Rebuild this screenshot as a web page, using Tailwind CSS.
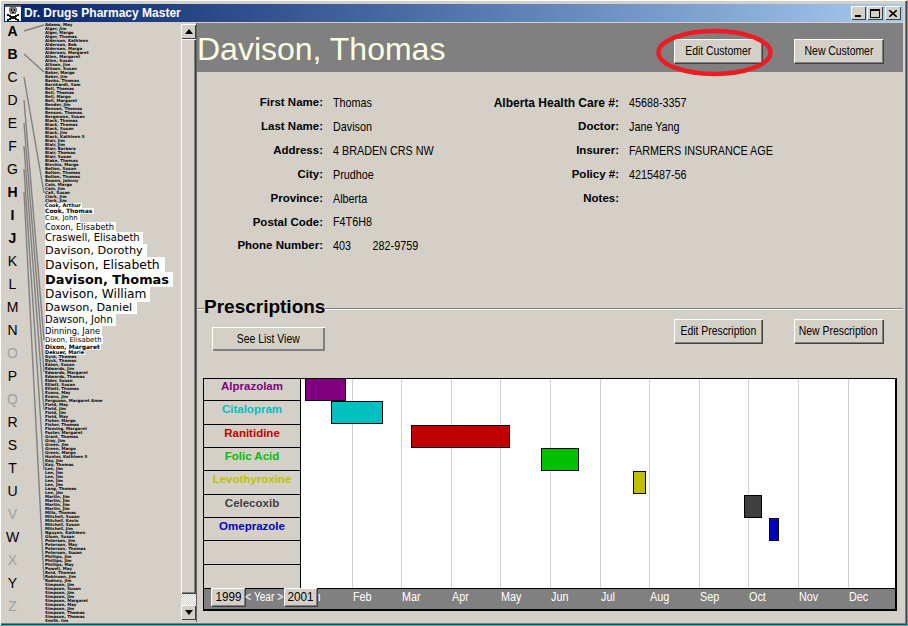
<!DOCTYPE html>
<html>
<head>
<meta charset="utf-8">
<script src="https://cdn.jsdelivr.net/npm/@tailwindcss/browser@4"></script>
</head>
<body class="w-[908px] h-[626px] bg-[#1cc7cc] overflow-hidden font-['Liberation_Sans','Arial',sans-serif]">
<div class="relative w-[907px] h-[625px] bg-[#d4d0c8] pt-[4px] pl-[4px] pr-[4px] pb-[3px] flex flex-col shadow-[inset_1px_1px_0_#ffffff,inset_-1px_-1px_0_#404040,inset_-2px_-2px_0_#808080]">

  <!-- title bar -->
  <div class="h-[18px] mb-[1px] shrink-0 flex items-center bg-gradient-to-r from-[#0a246a] to-[#a6caf0]">
    <svg class="w-[16px] h-[16px] ml-[1px] shrink-0" viewBox="0 0 16 16" shape-rendering="crispEdges">
      <rect width="16" height="16" fill="#fff"/>
      <path d="M0 0h16v2H0z" fill="#555"/>
      <path d="M5 2h6v1h1v4h-1v2H5V7H4V3h1z" fill="#777"/>
      <path d="M6 4h1v2H6zM9 4h1v2H9zM7 7h2v1H7z" fill="#000"/>
      <path d="M2 9h2v1h2v1h4v-1h2V9h2v2h-2v1h-1v1h1v1h2v2h-2v-1h-2v-1H6v1H4v1H2v-2h2v-1h1v-1H4v-1H2z" fill="#111"/>
    </svg>
    <span class="ml-[3px] text-[12px] font-bold text-white whitespace-nowrap">Dr. Drugs Pharmacy Master</span>
    <div class="ml-auto mr-[2px] flex">
      <div class="w-[15px] h-[14px] bg-[#d4d0c8] flex items-end justify-start pl-[4px] pb-[3px] shadow-[inset_1px_1px_0_#fff,inset_-1px_-1px_0_#404040]"><div class="w-[6px] h-[2px] bg-black"></div></div>
      <div class="w-[16px] h-[14px] ml-[1px] bg-[#d4d0c8] flex items-center justify-center shadow-[inset_1px_1px_0_#fff,inset_-1px_-1px_0_#404040]"><div class="w-[10px] h-[9px] border border-black border-t-2"></div></div>
      <div class="w-[16px] h-[14px] ml-[2px] bg-[#d4d0c8] flex items-center justify-center shadow-[inset_1px_1px_0_#fff,inset_-1px_-1px_0_#404040]">
        <svg class="w-[8px] h-[7px]" viewBox="0 0 8 7"><path d="M0 0L8 7M8 0L0 7" stroke="#000" stroke-width="1.6"/></svg>
      </div>
    </div>
  </div>

  <div class="flex flex-1 min-h-0">
    <!-- left: alphabet, fisheye list, scrollbar -->
    <div class="w-[193px] shrink-0 flex">
      <div class="w-[17px] shrink-0 -mt-[3px] text-[14px] text-black text-center">
        <div class="h-[23px] leading-[23px] font-bold">A</div>
        <div class="h-[23px] leading-[23px] font-bold">B</div>
        <div class="h-[23px] leading-[23px]">C</div>
        <div class="h-[23px] leading-[23px]">D</div>
        <div class="h-[23px] leading-[23px]">E</div>
        <div class="h-[23px] leading-[23px]">F</div>
        <div class="h-[23px] leading-[23px]">G</div>
        <div class="h-[23px] leading-[23px] font-bold">H</div>
        <div class="h-[23px] leading-[23px] font-bold">I</div>
        <div class="h-[23px] leading-[23px] font-bold">J</div>
        <div class="h-[23px] leading-[23px]">K</div>
        <div class="h-[23px] leading-[23px]">L</div>
        <div class="h-[23px] leading-[23px]">M</div>
        <div class="h-[23px] leading-[23px]">N</div>
        <div class="h-[23px] leading-[23px] text-[#a0a0a0]">O</div>
        <div class="h-[23px] leading-[23px]">P</div>
        <div class="h-[23px] leading-[23px] text-[#a0a0a0]">Q</div>
        <div class="h-[23px] leading-[23px]">R</div>
        <div class="h-[23px] leading-[23px]">S</div>
        <div class="h-[23px] leading-[23px]">T</div>
        <div class="h-[23px] leading-[23px]">U</div>
        <div class="h-[23px] leading-[23px] text-[#a0a0a0]">V</div>
        <div class="h-[23px] leading-[23px]">W</div>
        <div class="h-[23px] leading-[23px] text-[#a0a0a0]">X</div>
        <div class="h-[23px] leading-[23px]">Y</div>
        <div class="h-[23px] leading-[23px] text-[#a0a0a0]">Z</div>
      </div>
      <div class="w-[24px] shrink-0"></div>
      <div class="w-[136px] shrink-0 h-[599px] overflow-hidden font-['DejaVu_Sans',sans-serif] text-[4px] leading-[4px] font-bold text-black whitespace-nowrap">
        <div>Adams, May</div><div>Alger, Jim</div><div>Alger, Margo</div><div>Alger, Thomas</div><div>Alderson, Kathleen</div><div>Alderson, Bob</div><div>Alderson, Margo</div><div>Alderson, Margaret</div><div>Allen, Margaret</div><div>Allen, Susan</div><div>Allison, Jim</div><div>Allison, Susan</div><div>Baker, Margo</div><div>Baker, Jim</div><div>Banks, Thomas</div><div>Barnhardt, Sam</div><div>Bell, Thomas</div><div>Bell, Thomas</div><div>Bell, Margo</div><div>Bell, Margaret</div><div>Bender, Jim</div><div>Benson, Thomas</div><div>Benson, Thomas</div><div>Bergmann, Susan</div><div>Black, Thomas</div><div>Black, Thomas</div><div>Black, Susan</div><div>Black, Jim</div><div>Black, Kathleen S</div><div>Blair, Jim</div><div>Blair, Jim</div><div>Blair, Barbara</div><div>Blair, Thomas</div><div>Blair, Susan</div><div>Blake, Thomas</div><div>Blevins, Margo</div><div>Bolton, Susan</div><div>Bolton, Thomas</div><div>Bolton, Thomas</div><div>Bowen, Johnny</div><div>Cain, Margo</div><div>Cain, Jim</div><div>Call, Susan</div><div>Clark, Jim</div><div>Clark, Jim</div>
        <div class="h-[5px] text-[5px] leading-[5px] w-fit pr-[1px] bg-white">Cook, Arthur</div>
        <div class="h-[6px] text-[6px] leading-[6px] w-fit pr-[2px] bg-white">Cook, Thomas</div>
        <div class="h-[8px] text-[7px] leading-[8px] font-normal w-[35px] bg-white">Cox, John</div>
        <div class="h-[10px] text-[8.3px] leading-[10px] font-normal w-fit pr-[2px] bg-white">Coxon, Elisabeth</div>
        <div class="h-[12px] text-[10px] leading-[12px] font-normal w-fit pr-[3px] bg-white">Craswell, Elisabeth</div>
        <div class="h-[13px] text-[11.3px] leading-[13px] font-normal w-fit pr-[4px] bg-white">Davison, Dorothy</div>
        <div class="h-[15px] text-[12.4px] leading-[15px] font-normal w-fit pr-[5px] bg-white">Davison, Elisabeth</div>
        <div class="h-[15px] text-[12.9px] leading-[15px] font-bold w-fit pr-[4px] bg-white">Davison, Thomas</div>
        <div class="h-[15px] text-[12.2px] leading-[15px] font-normal w-fit pr-[4px] bg-white">Davison, William</div>
        <div class="h-[12px] text-[11.2px] leading-[12px] font-normal w-fit pr-[5px] bg-white">Dawson, Daniel</div>
        <div class="h-[12px] text-[10px] leading-[12px] font-normal w-fit pr-[3px] bg-white">Dawson, John</div>
        <div class="h-[10px] text-[8.3px] leading-[10px] font-normal w-fit pr-[2px] bg-white">Dinning, Jane</div>
        <div class="h-[8px] text-[7px] leading-[8px] font-normal w-fit pr-[1px] bg-white">Dixon, Elisabeth</div>
        <div class="h-[6px] text-[6px] leading-[6px] w-fit pr-[1px] bg-white">Dixon, Margaret</div>
        <div class="h-[5px] text-[5px] leading-[5px] w-fit pr-[1px] bg-white">Dekuer, Marie</div>
        <div>Dyck, Thomas</div><div>Dyck, Thomas</div><div>Eaton, Susan</div><div>Edwards, Jim</div><div>Edwards, Margaret</div><div>Edwards, Thomas</div><div>Elder, Susan</div><div>Elliott, Susan</div><div>Elliott, Thomas</div><div>Evans, May</div><div>Evans, Jim</div><div>Ferguson, Margaret Anne</div><div>Field, May</div><div>Field, Jim</div><div>Field, Jim</div>
        <div>Field, May</div><div>Fisher, Margo</div><div>Fisher, Thomas</div><div>Fleming, Margaret</div><div>Foster, Margaret</div><div>Grant, Thomas</div><div>Gray, Jim</div><div>Green, Jim</div><div>Green, Margo</div><div>Green, Margo</div><div>Hunter, Kathleen S</div><div>Kay, Jim</div><div>Kay, Thomas</div><div>Lee, Jim</div><div>Lee, Jim</div><div>Lee, Jim</div><div>Lee, Jim</div><div>Lee, Jim</div><div>Lang, Thomas</div><div>Lee, Jim</div><div>Martin, Jim</div><div>Martin, Jim</div><div>Martin, Jim</div><div>Martin, Jim</div><div>Mills, Thomas</div><div>Mitchell, Susan</div><div>Mitchell, Kevin</div><div>Mitchell, Susan</div><div>Mitchell, Jim</div><div>Nguyen, Kathleen</div><div>Olson, Susan</div><div>Peterson, Jim</div><div>Peterson, May</div><div>Peterson, Thomas</div><div>Peterson, Susan</div><div>Phillips, Jim</div><div>Phillips, Jim</div><div>Phillips, May</div><div>Powell, May</div><div>Reid, Thomas</div><div>Robinson, Jim</div><div>Rodney, Jim</div><div>Simpson, Jim</div><div>Simpson, Susan</div><div>Simpson, Jim</div><div>Simpson, Jim</div><div>Simpson, Margaret</div><div>Simpson, May</div><div>Simpson, Jim</div><div>Simpson, Thomas</div><div>Simpson, Thomas</div><div>Smith, Jim</div>
      </div>
      <div class="w-[15px] shrink-0 flex flex-col pt-[1px]">
        <div class="h-[15px] shrink-0 bg-[#d4d0c8] flex items-center justify-center shadow-[inset_1px_1px_0_#fff,inset_-1px_-1px_0_#404040]">
          <svg class="w-[8px] h-[5px]" viewBox="0 0 8 5"><path d="M4 0L8 5H0z" fill="#000"/></svg>
        </div>
        <div class="flex-1 bg-[#d4d0c8] shadow-[inset_1px_1px_0_#fff,inset_-1px_-1px_0_#404040,inset_-2px_-2px_0_#808080]"></div>
        <div class="h-[11px] shrink-0 bg-[repeating-conic-gradient(#ffffff_0_25%,#d4d0c8_0_50%)] bg-[length:2px_2px]"></div>
        <div class="h-[15px] mb-[2px] shrink-0 bg-[#d4d0c8] flex items-center justify-center shadow-[inset_1px_1px_0_#fff,inset_-1px_-1px_0_#404040]">
          <svg class="w-[8px] h-[5px]" viewBox="0 0 8 5"><path d="M0 0H8L4 5z" fill="#000"/></svg>
        </div>
      </div>
      <div class="w-[1px] shrink-0 bg-[#606060]"></div>
    </div>

    <!-- right: customer detail -->
    <div class="flex-1 min-w-0 flex flex-col">
      <div class="h-[49px] shrink-0 bg-[#808080] flex items-start">
        <div class="text-[32px] leading-[53px] h-[49px] text-[#ffffe1] whitespace-nowrap">Davison, Thomas</div>
        <button class="ml-auto mt-[16px] w-[88px] h-[24px] flex items-center justify-center bg-[#d4d0c8] text-[13px] text-black shadow-[inset_1px_1px_0_#fff,inset_-1px_-1px_0_#808080,1px_1px_0_#404040]"><span class="inline-block shrink-0 scale-x-[0.8] whitespace-nowrap">Edit Customer</span></button>
        <button class="ml-[32px] mr-[20px] mt-[16px] w-[89px] h-[24px] flex items-center justify-center bg-[#d4d0c8] text-[13px] text-black shadow-[inset_1px_1px_0_#fff,inset_-1px_-1px_0_#808080,1px_1px_0_#404040]"><span class="inline-block shrink-0 scale-x-[0.8] whitespace-nowrap">New Customer</span></button>
      </div>

      <div class="flex pt-[19px] h-[186px] shrink-0 text-black">
        <div class="grid grid-cols-[136px_156px] auto-rows-[23.85px] items-center">
          <div class="text-[11.5px] font-bold text-right pr-[10px]">First Name:</div><div class="text-[13px] origin-left scale-x-[0.83] whitespace-nowrap">Thomas</div>
          <div class="text-[11.5px] font-bold text-right pr-[10px]">Last Name:</div><div class="text-[13px] origin-left scale-x-[0.83] whitespace-nowrap">Davison</div>
          <div class="text-[11.5px] font-bold text-right pr-[10px]">Address:</div><div class="text-[13px] origin-left scale-x-[0.83] whitespace-nowrap">4 BRADEN CRS NW</div>
          <div class="text-[11.5px] font-bold text-right pr-[10px]">City:</div><div class="text-[13px] origin-left scale-x-[0.83] whitespace-nowrap">Prudhoe</div>
          <div class="text-[11.5px] font-bold text-right pr-[10px]">Province:</div><div class="text-[13px] origin-left scale-x-[0.83] whitespace-nowrap">Alberta</div>
          <div class="text-[11.5px] font-bold text-right pr-[10px]">Postal Code:</div><div class="text-[13px] origin-left scale-x-[0.83] whitespace-nowrap">F4T6H8</div>
          <div class="text-[11.5px] font-bold text-right pr-[10px]">Phone Number:</div><div class="text-[13px] origin-left scale-x-[0.83] whitespace-nowrap flex gap-[26px]"><span>403</span><span>282-9759</span></div>
        </div>
        <div class="grid grid-cols-[140px_1fr] auto-rows-[23.85px] items-center self-start">
          <div class="text-[12px] font-bold text-right pr-[10px] whitespace-nowrap">Alberta Health Care #:</div><div class="text-[13px] origin-left scale-x-[0.83] whitespace-nowrap">45688-3357</div>
          <div class="text-[11.5px] font-bold text-right pr-[10px]">Doctor:</div><div class="text-[13px] origin-left scale-x-[0.83] whitespace-nowrap">Jane Yang</div>
          <div class="text-[11.5px] font-bold text-right pr-[10px]">Insurer:</div><div class="text-[13px] origin-left scale-x-[0.83] whitespace-nowrap">FARMERS INSURANCE AGE</div>
          <div class="text-[11.5px] font-bold text-right pr-[10px]">Policy #:</div><div class="text-[13px] origin-left scale-x-[0.83] whitespace-nowrap">4215487-56</div>
          <div class="text-[11.5px] font-bold text-right pr-[10px]">Notes:</div><div></div>
        </div>
      </div>

      <div class="mt-[37px] h-[24px] shrink-0 flex items-start">
        <div class="w-[7px] mt-[13px] h-[2px] border-t border-b border-t-[#808080] border-b-white"></div>
        <div class="text-[19px] leading-[24px] font-bold text-black">Prescriptions</div>
        <div class="flex-1 mt-[13px] h-[2px] border-t border-b border-t-[#808080] border-b-white"></div>
      </div>

      <div class="h-[59px] shrink-0 flex items-start text-[13px] text-black">
        <button class="ml-[15px] mt-[8px] w-[113px] h-[24px] flex items-center justify-center bg-[#d4d0c8] shadow-[inset_1px_1px_0_#fff,inset_-1px_-1px_0_#808080,inset_-2px_-2px_0_#808080]"><span class="inline-block shrink-0 scale-x-[0.8] whitespace-nowrap">See List View</span></button>
        <button class="ml-auto w-[88px] h-[24px] flex items-center justify-center bg-[#d4d0c8] shadow-[inset_1px_1px_0_#fff,inset_-1px_-1px_0_#808080,1px_1px_0_#404040]"><span class="inline-block shrink-0 scale-x-[0.8] whitespace-nowrap">Edit Prescription</span></button>
        <button class="ml-[32px] mr-[20px] w-[89px] h-[24px] flex items-center justify-center bg-[#d4d0c8] shadow-[inset_1px_1px_0_#fff,inset_-1px_-1px_0_#808080,1px_1px_0_#404040]"><span class="inline-block shrink-0 scale-x-[0.8] whitespace-nowrap">New Prescription</span></button>
      </div>

      <!-- chart -->
      <div class="ml-[6px] w-[694px] shrink-0 border-t border-l border-r-2 border-b-2 border-black flex flex-col">
        <div class="h-[209px] flex">
          <div class="w-[97px] shrink-0 border-r border-black text-[11.5px] leading-[15px] font-bold text-center">
            <div class="h-[22px] border-b border-black text-[#800080]">Alprazolam</div>
            <div class="h-[24px] pt-[1px] border-b border-black text-[#00c0c0]">Citalopram</div>
            <div class="h-[23px] pt-[1px] border-b border-black text-[#c00000]">Ranitidine</div>
            <div class="h-[23px] pt-[1px] border-b border-black text-[#00c000]">Folic Acid</div>
            <div class="h-[24px] pt-[1px] border-b border-black text-[#c0c000]">Levothyroxine</div>
            <div class="h-[23px] pt-[1px] border-b border-black text-[#404040]">Celecoxib</div>
            <div class="h-[23px] pt-[1px] border-b border-black text-[#0000c0]">Omeprazole</div>
            <div class="h-[24px] border-b border-black"></div>
            <div class="h-[23px]"></div>
          </div>
          <div class="relative flex-1 bg-white">
            <div class="absolute inset-0 flex pl-[2px]">
              <div class="w-[49.6px] border-r border-[#d4d0c8]"></div><div class="w-[49.6px] border-r border-[#d4d0c8]"></div><div class="w-[49.6px] border-r border-[#d4d0c8]"></div><div class="w-[49.6px] border-r border-[#d4d0c8]"></div><div class="w-[49.6px] border-r border-[#d4d0c8]"></div><div class="w-[49.6px] border-r border-[#d4d0c8]"></div><div class="w-[49.6px] border-r border-[#d4d0c8]"></div><div class="w-[49.6px] border-r border-[#d4d0c8]"></div><div class="w-[49.6px] border-r border-[#d4d0c8]"></div><div class="w-[49.6px] border-r border-[#d4d0c8]"></div><div class="w-[49.6px] border-r border-[#d4d0c8]"></div>
            </div>
            <div class="absolute left-[4px] top-[-1px] w-[41px] h-[23px] border border-black bg-[#800080]"></div>
            <div class="absolute left-[30px] top-[22px] w-[52px] h-[23px] border border-black bg-[#00c0c0]"></div>
            <div class="absolute left-[110px] top-[46px] w-[99px] h-[23px] border border-black bg-[#c00000]"></div>
            <div class="absolute left-[240px] top-[69px] w-[38px] h-[23px] border border-black bg-[#00c000]"></div>
            <div class="absolute left-[332px] top-[92px] w-[13px] h-[23px] border border-black bg-[#c0c000]"></div>
            <div class="absolute left-[443px] top-[116px] w-[18px] h-[23px] border border-black bg-[#404040]"></div>
            <div class="absolute left-[468px] top-[139px] w-[10px] h-[23px] border border-black bg-[#0000c0]"></div>
          </div>
        </div>
        <div class="relative h-[21px] bg-[#808080] border-t border-black flex pl-[99px] text-[13px] leading-[15px] text-white">
          <span class="w-[49.6px] shrink-0 origin-left scale-x-[0.83]">Jan</span><span class="w-[49.6px] shrink-0 origin-left scale-x-[0.83]">Feb</span><span class="w-[49.6px] shrink-0 origin-left scale-x-[0.83]">Mar</span><span class="w-[49.6px] shrink-0 origin-left scale-x-[0.83]">Apr</span><span class="w-[49.6px] shrink-0 origin-left scale-x-[0.83]">May</span><span class="w-[49.6px] shrink-0 origin-left scale-x-[0.83]">Jun</span><span class="w-[49.6px] shrink-0 origin-left scale-x-[0.83]">Jul</span><span class="w-[49.6px] shrink-0 origin-left scale-x-[0.83]">Aug</span><span class="w-[49.6px] shrink-0 origin-left scale-x-[0.83]">Sep</span><span class="w-[49.6px] shrink-0 origin-left scale-x-[0.83]">Oct</span><span class="w-[49.6px] shrink-0 origin-left scale-x-[0.83]">Nov</span><span class="w-[49.6px] shrink-0 origin-left scale-x-[0.83]">Dec</span>
          <div class="absolute left-[7px] top-[-1px] flex items-start leading-[17px]">
            <div class="w-[34px] h-[18px] bg-[#d4d0c8] text-black text-center shadow-[inset_1px_1px_0_#fff,inset_-1px_-1px_0_#808080,1px_1px_0_#404040]"><span class="inline-block scale-x-[0.9]">1999</span></div>
            <div class="w-[39px] flex justify-center whitespace-nowrap"><span class="inline-block shrink-0 scale-x-[0.78]">&lt; Year &gt;</span></div>
            <div class="w-[33px] h-[18px] bg-[#d4d0c8] text-black text-center shadow-[inset_1px_1px_0_#fff,inset_-1px_-1px_0_#808080,1px_1px_0_#404040]"><span class="inline-block scale-x-[0.9]">2001</span></div>
          </div>
        </div>
      </div>
    </div>
  </div>

  <!-- overlay: connector lines of the alphabet and the red hand-drawn circle -->
  <svg class="absolute left-0 top-0 w-[907px] h-[625px] pointer-events-none" viewBox="0 0 907 625" fill="none">
    <g stroke="#808080" stroke-width="1.4">
      <path d="M24 31L44 25"/>
      <path d="M24 54L44 72"/>
      <path d="M24 77L44 193"/>
      <path d="M24 100L44 340"/>
      <path d="M24 123L44 372"/>
      <path d="M24 146L44 410"/>
      <path d="M24 169L44 470"/>
      <path d="M24 192L44 580"/>
    </g>
    <ellipse cx="714.5" cy="52.5" rx="56" ry="21.5" stroke="#ed1c24" stroke-width="4.5"/>
  </svg>
</div>
</body>
</html>
